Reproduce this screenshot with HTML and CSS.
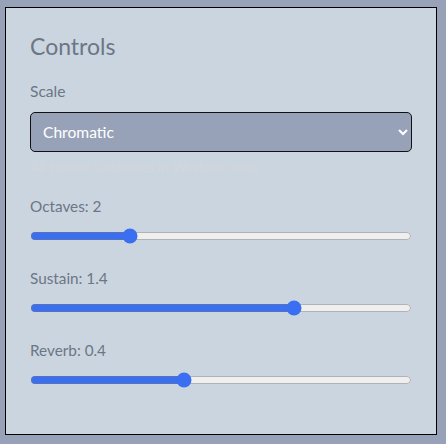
FILE: index.html
```html
<!DOCTYPE html>
<html lang="en">
<head>
<meta charset="utf-8">
<title>Controls</title>
<link rel="stylesheet" href="styles.css">
</head>
<body>
<section class="panel">
  <h2 class="title">Controls</h2>
  <div class="field scale-field">
    <label class="label" for="scale">Scale</label>
    <select id="scale" class="select">
      <option>Chromatic</option>
      <option>Major</option>
      <option>Minor</option>
    </select>
    <p class="hint">All twelve semitones in Western music</p>
  </div>
  <div class="field">
    <label class="label" for="octaves">Octaves: 2</label>
    <input id="octaves" class="range" type="range" min="1" max="5" step="1" value="2">
  </div>
  <div class="field">
    <label class="label" for="sustain">Sustain: 1.4</label>
    <input id="sustain" class="range" type="range" min="0" max="2" step="0.1" value="1.4">
  </div>
  <div class="field">
    <label class="label" for="reverb">Reverb: 0.4</label>
    <input id="reverb" class="range" type="range" min="0" max="1" step="0.1" value="0.4">
  </div>
</section>
</body>
</html>
```
FILE: styles.css
```css
html, body {
  margin: 0;
  padding: 0;
}
body {
  background: #97a2b8;
  font-family: Lato, "Noto Sans", sans-serif;
  padding: 7px 9px 9px 5px;
  width: 446px;
  height: 444px;
  box-sizing: border-box;
}
.panel {
  box-sizing: border-box;
  width: 432px;
  height: 428px;
  background: #cbd5df;
  border: 1px solid #000;
  padding: 24px 24px;
  display: flex;
  flex-direction: column;
}
.title {
  margin: 0 0 21px;
  font-size: 23px;
  line-height: 28px;
  font-weight: 400;
  color: #6c7686;
}
.field {
  display: flex;
  flex-direction: column;
  gap: 12px;
  margin-bottom: 24px;
}
.scale-field {
  gap: 0;
  margin-bottom: 20px;
}
.label {
  font-size: 15.3px;
  line-height: 20px;
  color: #6c7686;
}
.scale-field .label {
  font-size: 15.6px;
  margin-bottom: 11px;
}
.select {
  box-sizing: border-box;
  width: 100%;
  height: 40px;
  margin: 0;
  padding: 0 8px;
  border: 1px solid #111;
  border-radius: 5px;
  background-color: #97a2b8;
  color: #fff;
  font-family: Lato, "Noto Sans", sans-serif;
  font-size: 15.6px;
}
.hint {
  margin: 6px 0 0;
  font-size: 13.7px;
  line-height: 18px;
  color: #d3d6db;
}
.range {
  width: 100%;
  height: 16px;
  margin: 0;
  accent-color: #3a6ff2;
}
```
